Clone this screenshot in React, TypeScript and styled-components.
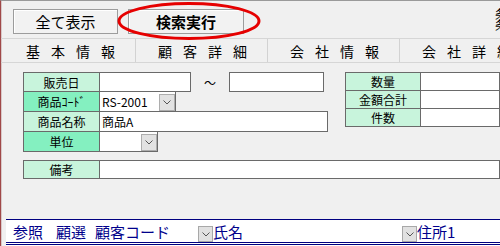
import React from "react";
import styled, { createGlobalStyle } from "styled-components";

const Global = createGlobalStyle`
  html, body { margin: 0; padding: 0; }
  body {
    width: 500px; height: 246px; overflow: hidden;
    background: #f0f0f0;
    font-family: "Noto Sans CJK JP", "Noto Sans", sans-serif;
  }
`;

const Frame = styled.div`
  position: relative;
  width: 500px;
  height: 246px;
  box-sizing: border-box;
  border-top: 1px solid #9a9a9a;
  border-left: 1px solid #a04848;
  box-shadow: inset 1px 0 0 #d8c8c8;
  display: flex;
  flex-direction: column;
  overflow: hidden;
`;

const Toolbar = styled.div`
  height: 37px;
  display: flex;
  align-items: flex-start;
  padding: 8px 0 0 12px;
  box-sizing: border-box;
  gap: 10px;
  position: relative;
`;

const Button = styled.button<{ $w: number; $bold?: boolean }>`
  width: ${(p) => p.$w}px;
  height: 25px;
  background: #f2f2f2;
  border: 1px solid #9c9c9c;
  box-shadow: inset 1px 1px 0 #ffffff;
  font-family: "Noto Sans CJK JP", sans-serif;
  font-size: 15px;
  font-weight: ${(p) => (p.$bold ? 700 : 400)};
  color: #000;
  padding: 0;
  line-height: 23px;
`;

const Highlight = styled.svg`
  position: absolute;
  left: 115px;
  top: 1px;
  width: 146px;
  height: 40px;
  pointer-events: none;
`;

const EdgeText = styled.div`
  position: absolute;
  left: 494px;
  top: 7px;
  font-size: 12px;
  line-height: 11px;
  color: #000;
  white-space: pre;
`;

const TabBar = styled.div`
  height: 25px;
  display: flex;
  padding-left: 3px;
  border-top: 1px solid #d6d6d6;
  border-bottom: 1px solid #d6d6d6;
  box-sizing: border-box;
`;

const Tab = styled.div`
  flex: 0 0 132px;
  box-sizing: border-box;
  border-right: 1px solid #d2d2d2;
  display: flex;
  align-items: center;
  padding-left: 22px;
  white-space: nowrap;
  font-size: 14px;
  letter-spacing: 11px;
  color: #000;
`;

const Form = styled.div`
  padding: 9px 0 0 22px;
  display: flex;
  flex-direction: column;
`;

const Columns = styled.div`
  display: flex;
`;

const LeftGroup = styled.div`
  width: 322px;
  display: flex;
  flex-direction: column;
`;

const RightGroup = styled.div`
  display: flex;
  flex-direction: column;
  flex: 1;
`;

const Row = styled.div<{ $h: number }>`
  display: flex;
  align-items: stretch;
  height: ${(p) => p.$h}px;
  & + & { margin-top: -1px; }
`;

const Label = styled.div<{ $req?: boolean; $w?: number }>`
  flex: 0 0 ${(p) => p.$w ?? 77}px;
  box-sizing: border-box;
  border: 1px solid #6a6a6a;
  background: ${(p) => (p.$req ? "#84f0c0" : "#c8f4dc")};
  display: flex;
  align-items: center;
  justify-content: center;
  font-size: 12px;
  color: #000;
`;

const Field = styled.div<{ $w?: number; $gap?: boolean }>`
  ${(p) => (p.$w ? `flex: 0 0 ${p.$w}px;` : "flex: 1;")}
  box-sizing: border-box;
  border: 1px solid #6a6a6a;
  margin-left: ${(p) => (p.$gap ? 0 : -1)}px;
  background: #fff;
  display: flex;
  align-items: center;
  padding-left: 2px;
  font-size: 12px;
  color: #000;
  position: relative;
`;

const Tilde = styled.div`
  flex: 0 0 38px;
  display: flex;
  align-items: center;
  justify-content: center;
  font-size: 12px;
`;

const DropBtn = styled.div`
  position: absolute;
  right: 0;
  bottom: 0;
  width: 16px;
  height: 17px;
  box-sizing: border-box;
  background: #e2e2e2;
  border: 1px solid #adadad;
  display: flex;
  align-items: center;
  justify-content: center;
`;

const MiniDrop = styled.div`
  width: 15px;
  height: 16px;
  box-sizing: border-box;
  background: #e1e1e1;
  border: 1px solid #a8a8a8;
  display: flex;
  align-items: center;
  justify-content: center;
  margin-top: 2px;
`;

const Chevron = () => (
  <svg width="8" height="5" viewBox="0 0 8 5">
    <path d="M0.5 0.5 L4 4 L7.5 0.5" fill="none" stroke="#555" strokeWidth="1" />
  </svg>
);

const Remarks = styled.div`
  margin-top: 8px;
`;

const Spacer = styled.div`
  flex: 1;
`;

const BottomBar = styled.div`
  margin-left: 5px;
  height: 27px;
  background: #fff;
  border-top: 1px solid #000080;
  box-sizing: border-box;
  display: flex;
  align-items: center;
  padding-left: 7px;
  position: relative;
  &::after {
    content: "";
    position: absolute;
    left: 0; right: 0; bottom: 1px;
    height: 3px;
    box-sizing: border-box;
    border-top: 1px solid #000080;
    border-bottom: 1px solid #000080;
  }
`;

const Col = styled.div<{ $w: number }>`
  flex: 0 0 ${(p) => p.$w}px;
  font-size: 15px;
  color: #00008b;
  white-space: nowrap;
  line-height: 20px;
  margin-top: -2px;
`;

export default function App() {
  return (
    <>
      <Global />
      <Frame>
        <Toolbar>
          <Button $w={105}>全て表示</Button>
          <Button $w={116} $bold>検索実行</Button>
          <Highlight viewBox="0 0 146 40">
            <ellipse cx="73" cy="19" rx="70" ry="17.5" fill="none" stroke="#e60000" strokeWidth="3" />
          </Highlight>
          <EdgeText>{"条\n条"}</EdgeText>
        </Toolbar>
        <TabBar>
          <Tab>基本情報</Tab>
          <Tab>顧客詳細</Tab>
          <Tab>会社情報</Tab>
          <Tab>会社詳細</Tab>
        </TabBar>
        <Form>
          <Columns>
            <LeftGroup>
              <Row $h={20}>
                <Label>販売日</Label>
                <Field $w={92} />
                <Tilde>～</Tilde>
                <Field $w={95} $gap />
              </Row>
              <Row $h={21}>
                <Label $req>商品ｺｰﾄﾞ</Label>
                <Field $w={77}>
                  RS-2001
                  <DropBtn><Chevron /></DropBtn>
                </Field>
              </Row>
              <Row $h={21}>
                <Label>商品名称</Label>
                <Field $w={229}>商品A</Field>
              </Row>
              <Row $h={21}>
                <Label $req>単位</Label>
                <Field $w={59}>
                  <DropBtn><Chevron /></DropBtn>
                </Field>
              </Row>
            </LeftGroup>
            <RightGroup>
              <Row $h={19}>
                <Label $w={76}>数量</Label>
                <Field />
              </Row>
              <Row $h={19}>
                <Label $w={76}>金額合計</Label>
                <Field />
              </Row>
              <Row $h={19}>
                <Label $w={76}>件数</Label>
                <Field />
              </Row>
            </RightGroup>
          </Columns>
          <Remarks>
            <Row $h={19}>
              <Label>備考</Label>
              <Field />
            </Row>
          </Remarks>
        </Form>
        <Spacer />
        <BottomBar>
          <Col $w={43}>参照</Col>
          <Col $w={39}>顧選</Col>
          <Col $w={103}>顧客コード</Col>
          <MiniDrop><Chevron /></MiniDrop>
          <Col $w={189}>氏名</Col>
          <MiniDrop><Chevron /></MiniDrop>
          <Col $w={60}>住所1</Col>
        </BottomBar>
      </Frame>
    </>
  );
}
